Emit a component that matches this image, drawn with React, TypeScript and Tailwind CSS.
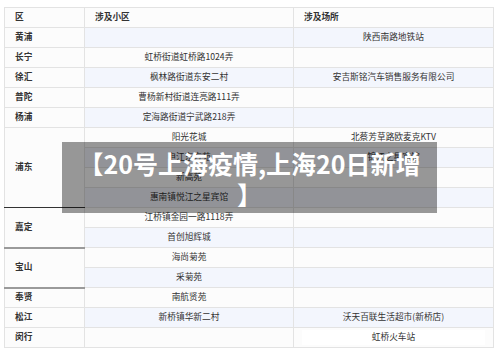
import React from 'react';

type Row = {
  district?: string;
  span?: number;
  divider?: string;
  place: string;
  site: string;
  siteBox?: boolean;
};

const rows: Row[] = [
  { district: '黄浦', place: '', site: '陕西南路地铁站' },
  { district: '长宁', place: '虹桥街道虹桥路1024弄', site: '' },
  { district: '徐汇', place: '枫林路街道东安二村', site: '安吉斯铭汽车销售服务有限公司' },
  { district: '普陀', place: '曹杨新村街道连亮路111弄', site: '' },
  { district: '杨浦', place: '定海路街道宁武路218弄', site: '' },
  { district: '浦东', span: 4, divider: 'border-b-[#333]', place: '阳光花城', site: '北蔡芳草路欧麦克KTV' },
  { place: '申江东方苑', site: '锦江之星宾馆' },
  { place: '新高苑', site: '' },
  { place: '惠南镇悦江之星宾馆', site: '' },
  { district: '嘉定', span: 2, divider: 'border-b-2 border-b-[#9a9a9a]', place: '江桥镇金园一路1118弄', site: '' },
  { place: '首创旭辉城', site: '' },
  { district: '宝山', span: 2, divider: 'border-b-2 border-b-[#9a9a9a]', place: '海尚菊苑', site: '' },
  { place: '采菊苑', site: '' },
  { district: '奉贤', place: '南航贤苑', site: '' },
  { district: '松江', place: '新桥镇华新二村', site: '沃天百联生活超市(新桥店)' },
  { district: '闵行', place: '', site: '虹桥火车站', siteBox: true },
];

export default function App() {
  return (
    <div
      className="relative w-[500px] h-[357px] bg-white overflow-hidden text-[#333]"
      style={{ fontFamily: '"Noto Sans CJK SC", "Noto Sans", sans-serif' }}
    >
      <div className="pt-[7px] pl-[4px]">
        <table className="table-fixed border-collapse w-[489px] text-[8.7px] leading-none">
          <colgroup>
            <col className="w-[80px]" />
            <col className="w-[209px]" />
            <col className="w-[200px]" />
          </colgroup>
          <thead>
            <tr className="h-[20px] bg-[#fcfcfc]">
              <th className="border border-[#e3e3e3] text-left pl-[10px] font-bold">区</th>
              <th className="border border-[#e3e3e3] text-left pl-[10px] font-bold">涉及小区</th>
              <th className="border border-[#e3e3e3] text-left pl-[10px] font-bold">涉及场所</th>
            </tr>
          </thead>
          <tbody>
            {rows.map((r, i) => {
              const blue = i % 2 === 0;
              return (
                <tr key={i} className={`h-[20px] ${blue ? 'bg-[#f3f6fd]' : 'bg-[#fcfcfc]'}`}>
                  {r.district && (
                    <td
                      rowSpan={r.span ?? 1}
                      className={`border border-[#e3e3e3] pl-[10px] font-bold bg-[#fcfcfc] ${
                        r.span ? '' : blue ? 'bg-[#f3f6fd]' : ''
                      } ${r.divider ?? ''}`}
                    >
                      {r.district}
                    </td>
                  )}
                  <td className="border border-[#e3e3e3] text-center">{r.place}</td>
                  <td className="border border-[#e3e3e3] text-center px-[8px]">
                    {r.siteBox ? (
                      <div className="bg-white h-[15px] flex items-center justify-center">{r.site}</div>
                    ) : (
                      r.site
                    )}
                  </td>
                </tr>
              );
            })}
          </tbody>
        </table>
      </div>

      <div className="absolute left-[62px] top-[142px] w-[375px] h-[71px] bg-black/40 pt-[6px] text-center text-white font-bold text-[25px] leading-[31px]">
        【20号上海疫情,上海20日新增
        <br />】
      </div>
    </div>
  );
}
